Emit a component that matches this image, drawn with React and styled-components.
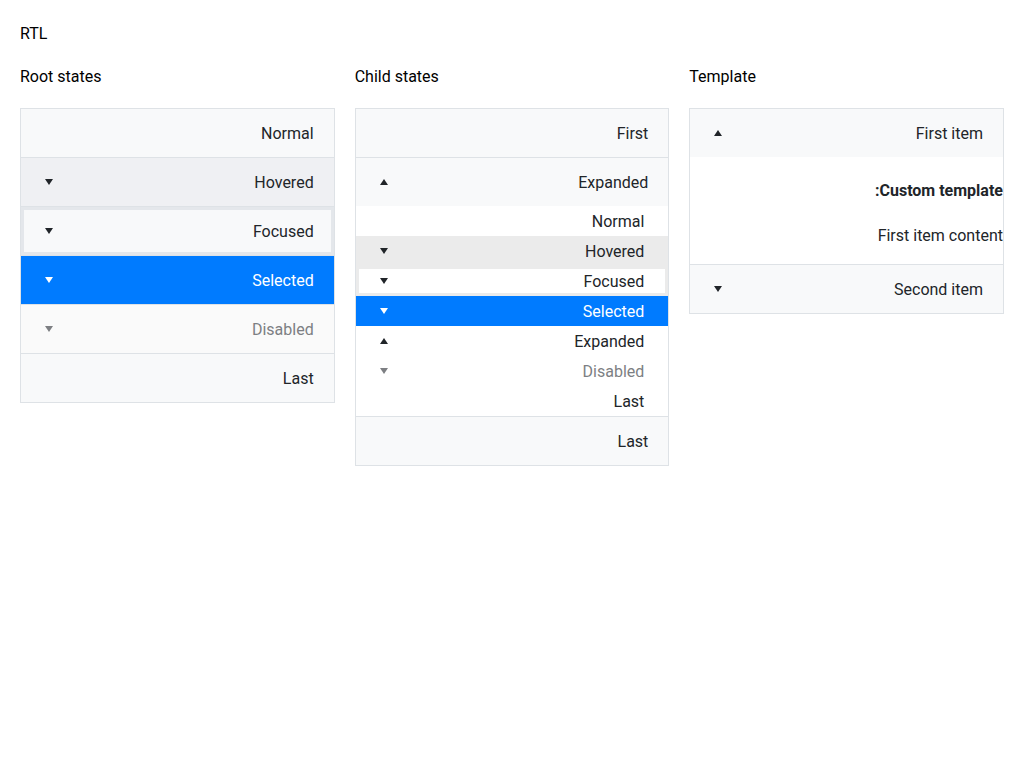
import React from "react";
import styled, { createGlobalStyle, css } from "styled-components";

const GlobalStyle = createGlobalStyle`
  html, body {
    margin: 0;
    padding: 0;
    background: #ffffff;
  }
  body {
    font-family: Roboto, "Liberation Sans", sans-serif;
    font-size: 16px;
    line-height: 24px;
    color: #000000;
  }
  * {
    box-sizing: border-box;
  }
`;

const Page = styled.div`
  padding: 22px 20px 20px;
  display: flex;
  flex-direction: column;
  gap: 19px;
`;

const Title = styled.div`
  font-size: 16px;
  line-height: 24px;
`;

const Columns = styled.div`
  display: grid;
  grid-template-columns: repeat(3, 1fr);
  gap: 20px;
  align-items: start;
`;

const Column = styled.div`
  display: flex;
  flex-direction: column;
  gap: 19px;
  min-width: 0;
`;

const Panel = styled.div`
  border: 1px solid #dee2e6;
  color: #212529;
  background: #ffffff;
  overflow: hidden;
`;

const Item = styled.div`
  & + & {
    border-top: 1px solid #dee2e6;
  }
`;

const Header = styled.div`
  display: flex;
  align-items: center;
  height: 48px;
  padding: 2px 20px 0;
  background: #f8f9fa;
  color: #212529;
  ${(p) =>
    p.$state === "hovered" &&
    css`
      background: #eff0f3;
    `}
  ${(p) =>
    p.$state === "focused" &&
    css`
      box-shadow: inset 0 0 0 3px #e4e7eb;
    `}
  ${(p) =>
    p.$state === "selected" &&
    css`
      background: #007bff;
      color: #ffffff;
    `}
  ${(p) =>
    p.$state === "disabled" &&
    css`
      background: #fafafa;
      color: #7d7f83;
    `}
`;

const Label = styled.span`
  white-space: nowrap;
`;

const Caret = styled.svg`
  width: 16px;
  height: 16px;
  margin-inline-start: auto;
  fill: currentColor;
  flex-shrink: 0;
  position: relative;
  top: -1px;
`;

const Group = styled.div`
  background: #ffffff;
`;

const Child = styled.div`
  display: flex;
  align-items: center;
  height: 30px;
  padding-top: 2px;
  padding-inline-start: 24px;
  padding-inline-end: 20px;
  color: #212529;
  ${(p) =>
    p.$state === "hovered" &&
    css`
      background: #ebebeb;
    `}
  ${(p) =>
    p.$state === "focused" &&
    css`
      box-shadow: inset 0 0 0 3px #ebebeb;
    `}
  ${(p) =>
    p.$state === "selected" &&
    css`
      background: #007bff;
      color: #ffffff;
    `}
  ${(p) =>
    p.$state === "disabled" &&
    css`
      color: #7d7f83;
    `}
`;

const Content = styled.div`
  background: #ffffff;
  padding: 22px 0 16px;
  display: flex;
  flex-direction: column;
  gap: 21px;
  white-space: nowrap;
`;

const Strong = styled.div`
  font-weight: 700;
`;

const Icon = ({ up }) => (
  <Caret viewBox="0 0 512 512">
    {up ? <path d="M256 160 384 352H128z" /> : <path d="M256 352 128 160h256z" />}
  </Caret>
);

const rootItems = [
  { text: "Normal" },
  { text: "Hovered", state: "hovered", caret: true },
  { text: "Focused", state: "focused", caret: true },
  { text: "Selected", state: "selected", caret: true },
  { text: "Disabled", state: "disabled", caret: true },
  { text: "Last" },
];

const childItems = [
  { text: "Normal" },
  { text: "Hovered", state: "hovered", caret: "down" },
  { text: "Focused", state: "focused", caret: "down" },
  { text: "Selected", state: "selected", caret: "down" },
  { text: "Expanded", caret: "up" },
  { text: "Disabled", state: "disabled", caret: "down" },
  { text: "Last" },
];

export default function App() {
  return (
    <>
      <GlobalStyle />
      <Page>
        <Title>RTL</Title>
        <Columns>
          <Column>
            <Title>Root states</Title>
            <Panel dir="rtl">
              {rootItems.map((it) => (
                <Item key={it.text}>
                  <Header $state={it.state}>
                    <Label>{it.text}</Label>
                    {it.caret && <Icon />}
                  </Header>
                </Item>
              ))}
            </Panel>
          </Column>
          <Column>
            <Title>Child states</Title>
            <Panel dir="rtl">
              <Item>
                <Header>
                  <Label>First</Label>
                </Header>
              </Item>
              <Item>
                <Header>
                  <Label>Expanded</Label>
                  <Icon up />
                </Header>
                <Group>
                  {childItems.map((it) => (
                    <Child key={it.text} $state={it.state}>
                      <Label>{it.text}</Label>
                      {it.caret && <Icon up={it.caret === "up"} />}
                    </Child>
                  ))}
                </Group>
              </Item>
              <Item>
                <Header>
                  <Label>Last</Label>
                </Header>
              </Item>
            </Panel>
          </Column>
          <Column>
            <Title>Template</Title>
            <Panel dir="rtl">
              <Item>
                <Header>
                  <Label>First item</Label>
                  <Icon up />
                </Header>
                <Content>
                  <Strong>Custom template:</Strong>
                  <div>First item content</div>
                </Content>
              </Item>
              <Item>
                <Header>
                  <Label>Second item</Label>
                  <Icon />
                </Header>
              </Item>
            </Panel>
          </Column>
        </Columns>
      </Page>
    </>
  );
}
